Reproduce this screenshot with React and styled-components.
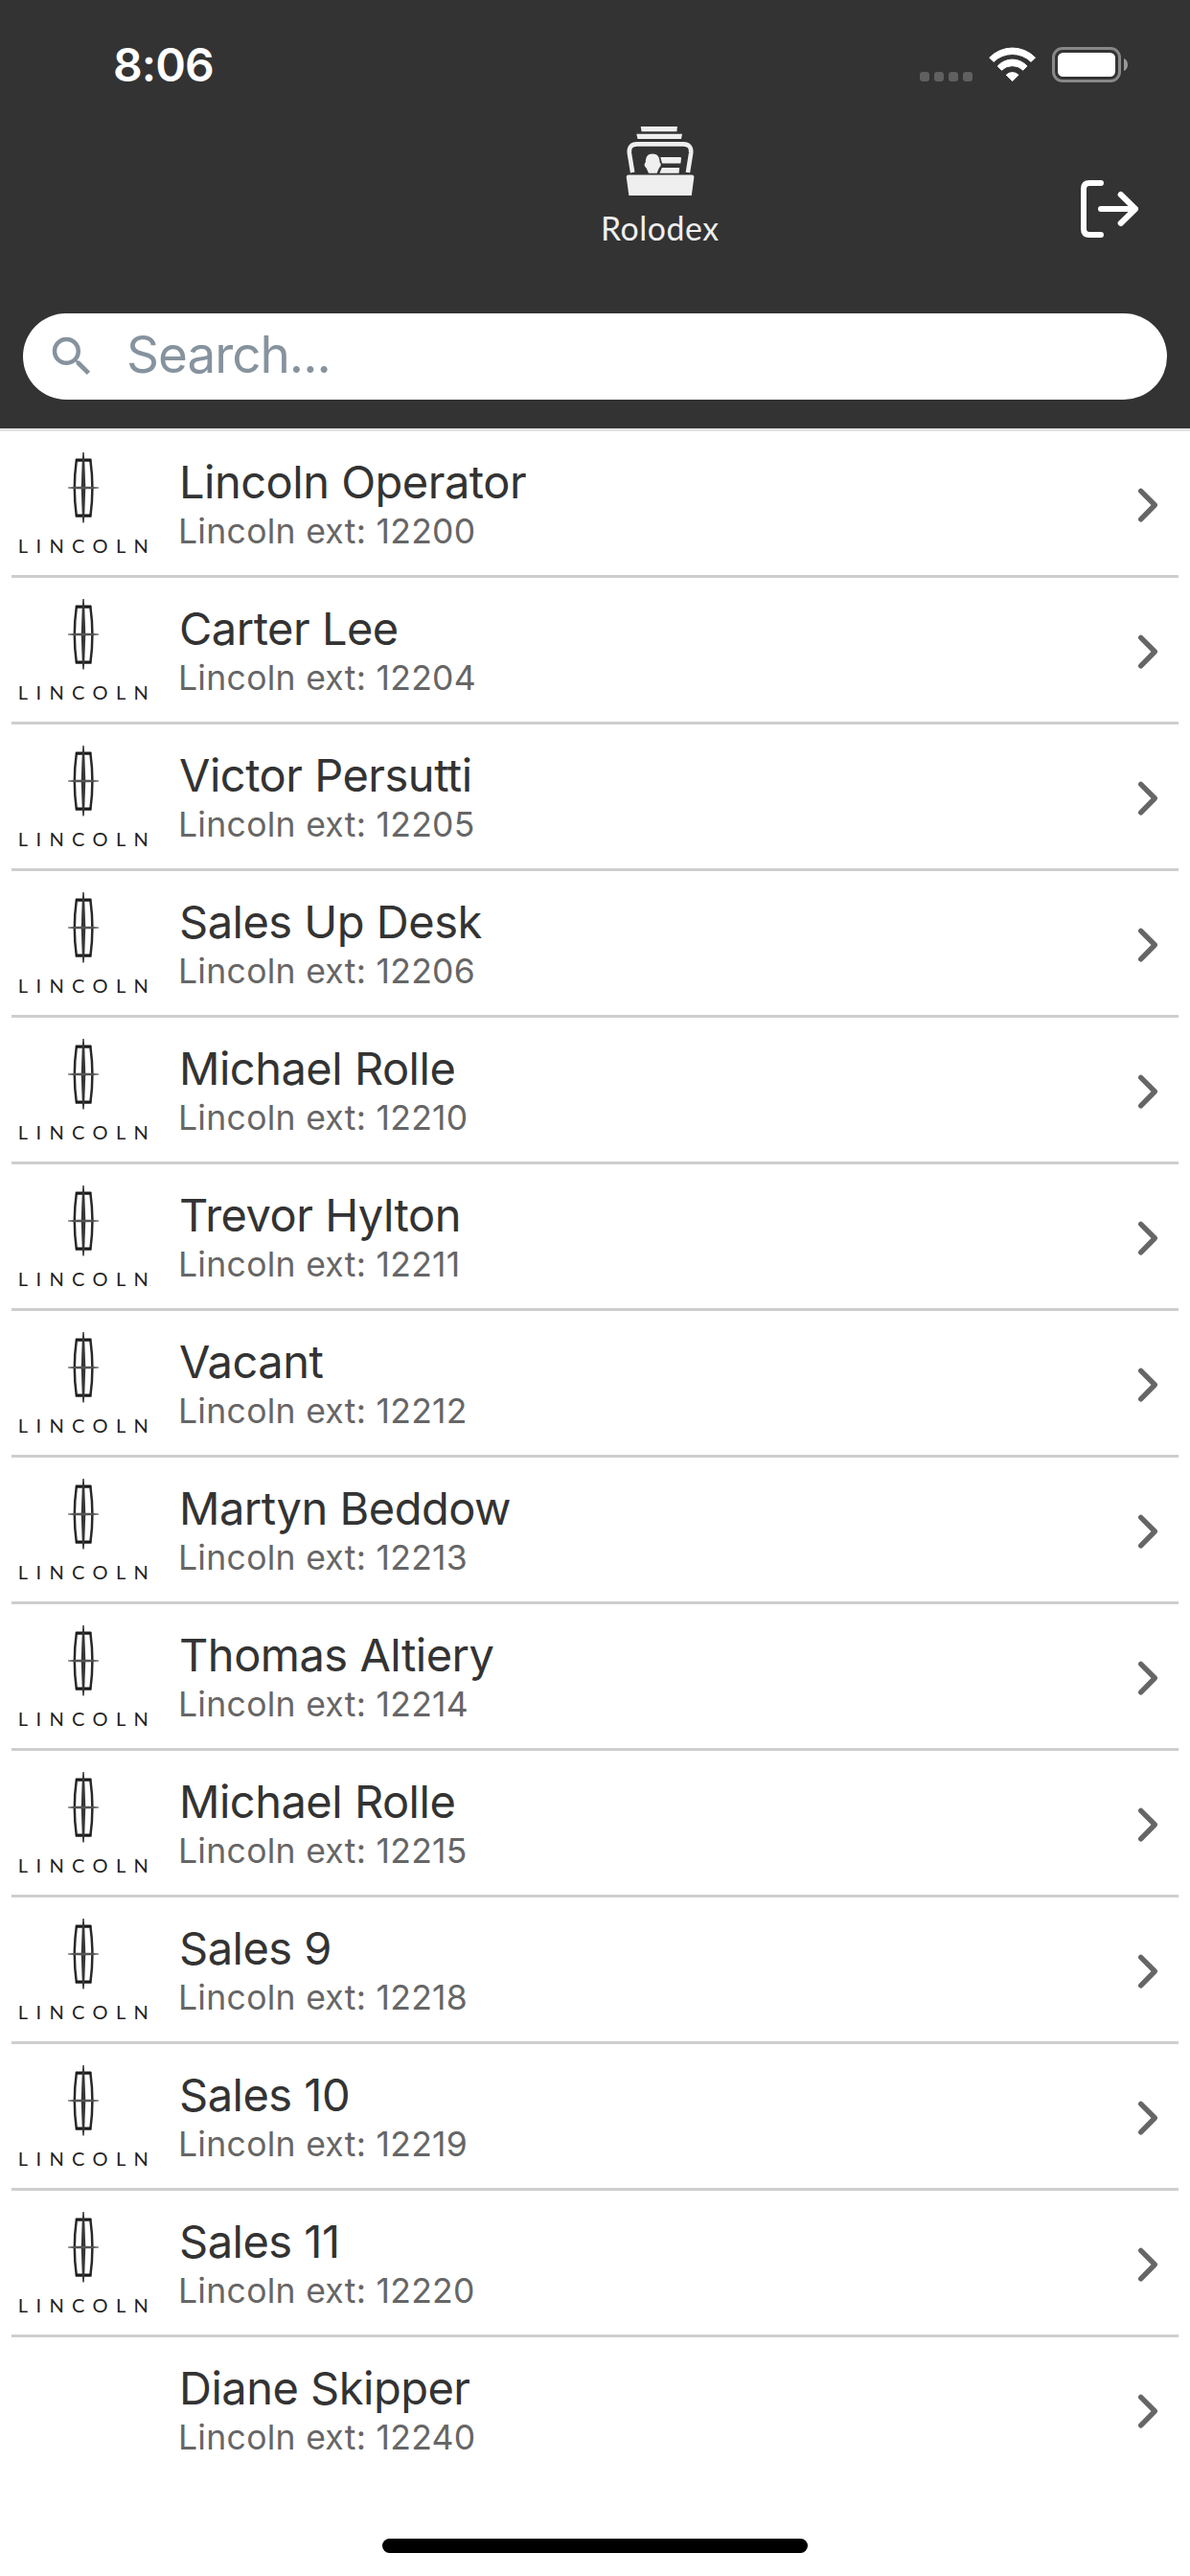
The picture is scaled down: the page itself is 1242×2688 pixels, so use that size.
import React from 'react';
import styled, { createGlobalStyle } from 'styled-components';

const GlobalStyle = createGlobalStyle`
  * {
    box-sizing: border-box;
  }
  body {
    margin: 0;
    background: #fff;
    font-family: Inter, "Liberation Sans", sans-serif;
  }
  svg {
    display: block;
  }
`;

const Screen = styled.div`
  width: 1242px;
  height: 2688px;
  display: flex;
  flex-direction: column;
  overflow: hidden;
  background: #fff;
`;

const Header = styled.header`
  height: 450px;
  flex-shrink: 0;
  background: #333;
  border-bottom: 3px solid #e1e1e1;
`;

const StatusBar = styled.div`
  height: 126px;
  padding: 0 63px 0 118px;
  display: flex;
  justify-content: space-between;
`;

const Clock = styled.span`
  padding-top: 38px;
  font-size: 48px;
  line-height: 60px;
  font-weight: 600;
  letter-spacing: -0.9px;
  color: #fff;
`;

const TitleBar = styled.div`
  height: 201px;
  padding-left: 255px;
  display: grid;
  grid-template-columns: 1fr 117px;
`;

const Brand = styled.div`
  display: flex;
  justify-content: center;
`;

const LogoutButton = styled.button`
  justify-self: start;
  align-self: start;
  margin-top: 56px;
  padding: 0;
  border: 0;
  background: none;
`;

const SearchBox = styled.label`
  height: 90px;
  margin: 0 24px;
  padding-left: 24px;
  display: flex;
  align-items: center;
  gap: 30px;
  border-radius: 45px;
  background: #fff;
`;

const SearchInput = styled.input`
  flex: 1;
  padding: 0 0 4px;
  border: 0;
  outline: 0;
  background: transparent;
  font-family: inherit;
  font-size: 53px;
  line-height: 66px;
  letter-spacing: -1px;
  &::placeholder {
    color: #86939e;
    opacity: 1;
  }
`;

const ContactList = styled.ul`
  list-style: none;
  margin: 0;
  padding: 0 12px;
`;

const Contact = styled.li`
  height: 153px;
  display: flex;
  border-bottom: 3px solid #cdcfcd;
  &:last-child {
    border-bottom-color: transparent;
  }
`;

const Avatar = styled.div`
  width: 150px;
  flex-shrink: 0;
`;

const Details = styled.div`
  flex: 1;
  padding: 24px 0 0 24px;
`;

const Name = styled.div`
  padding-left: 1px;
  font-size: 47px;
  line-height: 58px;
  letter-spacing: -0.5px;
  color: #333;
`;

const Extension = styled.div`
  margin-top: 1px;
  font-size: 35.5px;
  line-height: 44px;
  letter-spacing: 0.3px;
  color: #666;
`;

const ChevronSlot = styled.div`
  width: 47px;
  padding-top: 56px;
`;

const HomeIndicator = styled.div`
  width: 444px;
  height: 15px;
  margin: auto auto 24px;
  border-radius: 7.5px;
  background: #000;
  flex-shrink: 0;
`;

const contacts = [
  { name: 'Lincoln Operator', ext: '12200', logo: true },
  { name: 'Carter Lee', ext: '12204', logo: true },
  { name: 'Victor Persutti', ext: '12205', logo: true },
  { name: 'Sales Up Desk', ext: '12206', logo: true },
  { name: 'Michael Rolle', ext: '12210', logo: true },
  { name: 'Trevor Hylton', ext: '12211', logo: true },
  { name: 'Vacant', ext: '12212', logo: true },
  { name: 'Martyn Beddow', ext: '12213', logo: true },
  { name: 'Thomas Altiery', ext: '12214', logo: true },
  { name: 'Michael Rolle', ext: '12215', logo: true },
  { name: 'Sales 9', ext: '12218', logo: true },
  { name: 'Sales 10', ext: '12219', logo: true },
  { name: 'Sales 11', ext: '12220', logo: true },
  { name: 'Diane Skipper', ext: '12240', logo: false }
];

const StatusIcons = () => (
  <svg width="222" height="126" viewBox="957 0 222 126">
    {[960, 975, 990, 1005].map(x => (
      <rect key={x} x={x} y="75" width="10" height="10" rx="3.2" fill="#606060" />
    ))}
    <g fill="#fff" stroke="#fff" strokeWidth="1" strokeLinejoin="round">
      <path d="M1032.7 60.2A33.2 33.2 0 0 1 1080.5 60.2L1076 64.4A27.8 27.8 0 0 0 1037.2 64.4Z" />
      <path d="M1041.2 69A20.6 20.6 0 0 1 1072 69L1067.8 73.2A16 16 0 0 0 1045.4 73.2Z" />
      <path d="M1050.2 78.2A9.2 9.2 0 0 1 1063 78.2L1056.6 84.6Z" />
    </g>
    <rect x="1099.5" y="50.5" width="69" height="34" rx="9.5" fill="none" stroke="#888" strokeWidth="3" />
    <rect x="1104" y="55" width="60" height="25" rx="5.5" fill="#fff" />
    <path d="M1173 61C1178.3 63 1178.3 72 1173 74Z" fill="#999" />
  </svg>
);

const RolodexLogo = () => (
  <svg width="126" height="144" viewBox="627 126 126 144" fill="#efefef">
    <path d="M668.7 132H707L706.4 137.3H669.6Z" />
    <path d="M664.3 139.8H712L711 145H665.5Z" />
    <path d="M660.2 180L656.8 159.5Q656 150.4 665 150.4H713Q722 150.4 721.2 159.5L717.9 180" fill="none" stroke="#efefef" strokeWidth="4.6" />
    <path d="M656 182.4H722Q724.6 182.4 724.3 185.2L721.8 204H656.4L653.8 185.2Q653.5 182.4 656 182.4Z" />
    <path d="M681 160.4C686 160.4 688.6 163.5 688.6 169.6C690.4 170.8 690 174 688 175L685.6 180.8H677L674.4 175C672.4 174 672 170.8 673.8 169.6C673.8 163.5 676 160.4 681 160.4Z" />
    <path d="M689.3 164.1H710Q711.2 164.1 711 165.5L710.4 170.4H691Z" />
    <path d="M690.8 175H709.2L708.6 180.8H688.4Z" />
    <text x="627" y="251" fontFamily="Lato, sans-serif" fontSize="33.8" textLength="123">Rolodex</text>
  </svg>
);

const LogoutIcon = () => (
  <svg width="66" height="72" viewBox="1125 182 66 72" fill="none" stroke="#fff" strokeWidth="6" strokeLinecap="round" strokeLinejoin="round">
    <path d="M1149 191H1137Q1131 191 1131 197V239Q1131 245 1137 245H1149" />
    <path d="M1149 218H1185M1169.7 203L1185 218L1169.7 233" />
  </svg>
);

const SearchIcon = () => (
  <svg width="54" height="54" viewBox="0 0 24 24" fill="#86939e">
    <path d="M15.5 14h-.79l-.28-.27A6.471 6.471 0 0 0 16 9.5 6.5 6.5 0 1 0 9.5 16c1.61 0 3.09-.59 4.23-1.57l.27.28v.79l5 4.99L20.49 19l-4.99-5zm-6 0C7.01 14 5 11.99 5 9.5S7.01 5 9.5 5 14 7.01 14 9.5 11.99 14 9.5 14z" />
  </svg>
);

const LincolnLogo = () => (
  <svg width="150" height="150" viewBox="12 0 150 150">
    <path d="M79.8 30.3H94.4Q98.4 59 94.4 88.3H79.8Q75.8 59 79.8 30.3Z" fill="none" stroke="#2a2828" strokeWidth="2.5" />
    <path d="M79 30H95.2M79 88H95.2" stroke="#1c1a1a" strokeWidth="2.8" />
    <path d="M86.3 22H87.7L88.3 32L89.3 59L88.3 86L87.7 95.5H86.3L85.7 86L84.7 59L85.7 32Z" fill="#383636" />
    <path d="M71 58.4L80 57.7H94L103 58.4V59.6L94 60.3H80L71 59.6Z" fill="#555" />
    <text x="18.8" y="127.2" fontFamily="Lato, sans-serif" fontSize="20" textLength="136" fill="#222">LINCOLN</text>
  </svg>
);

const Chevron = () => (
  <svg width="30" height="42" viewBox="1183 506 30 42" fill="none" stroke="#666" strokeWidth="5.4" strokeLinecap="round" strokeLinejoin="round">
    <path d="M1190.7 512.4L1205.3 527L1190.7 541.8" />
  </svg>
);

const ContactRow = ({ contact }) => (
  <Contact>
    <Avatar>{contact.logo && <LincolnLogo />}</Avatar>
    <Details>
      <Name>{contact.name}</Name>
      <Extension>Lincoln ext: {contact.ext}</Extension>
    </Details>
    <ChevronSlot>
      <Chevron />
    </ChevronSlot>
  </Contact>
);

const App = () => (
  <Screen>
    <GlobalStyle />
    <Header>
      <StatusBar>
        <Clock>8:06</Clock>
        <StatusIcons />
      </StatusBar>
      <TitleBar>
        <Brand>
          <RolodexLogo />
        </Brand>
        <LogoutButton aria-label="Log out">
          <LogoutIcon />
        </LogoutButton>
      </TitleBar>
      <SearchBox>
        <SearchIcon />
        <SearchInput placeholder="Search..." />
      </SearchBox>
    </Header>
    <ContactList>
      {contacts.map(contact => (
        <ContactRow contact={contact} key={contact.ext} />
      ))}
    </ContactList>
    <HomeIndicator />
  </Screen>
);

export default App;
